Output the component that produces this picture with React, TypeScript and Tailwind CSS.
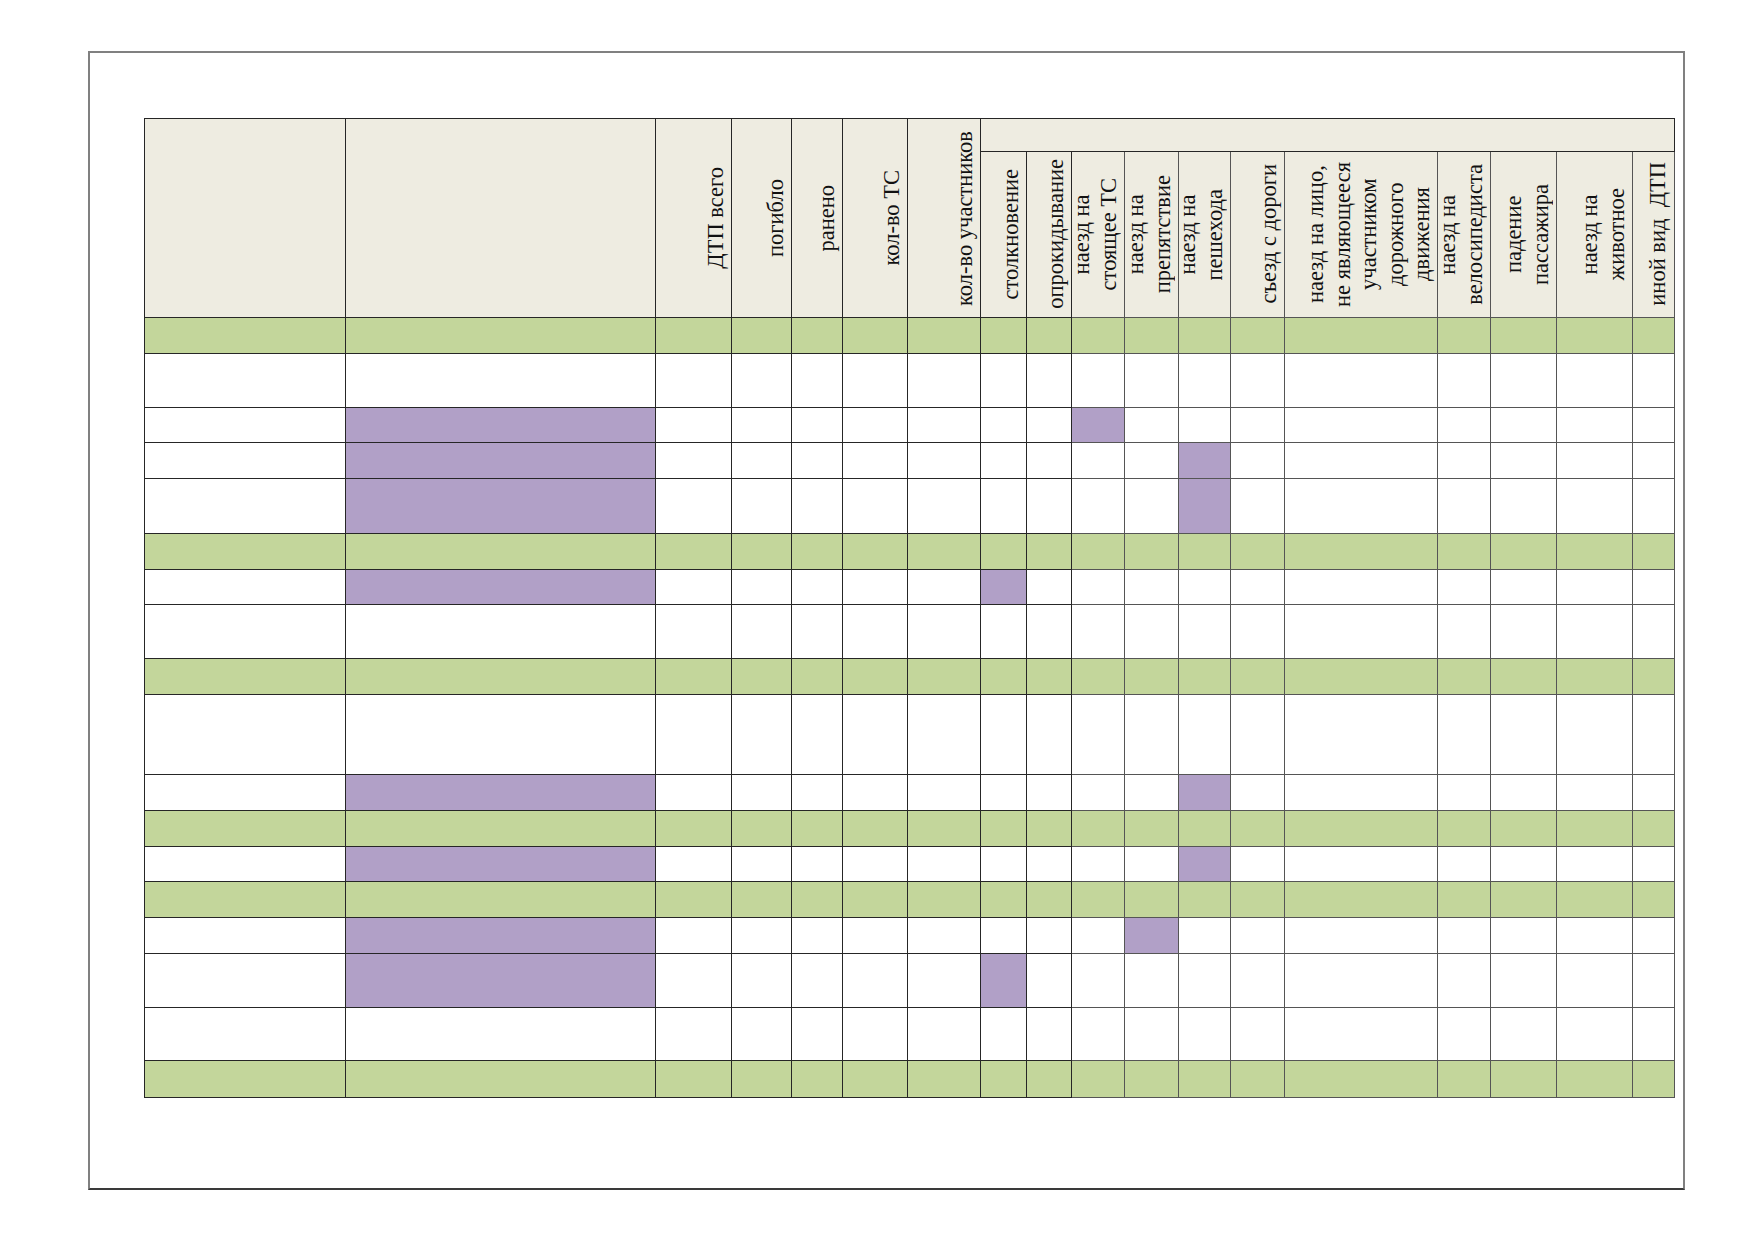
const HEAD = [
  { w: 'w-[201.5px]', lines: [] as string[] },
  { w: 'w-[310px]', lines: [] as string[] },
  { w: 'w-[76px]', lines: ['ДТП всего'] },
  { w: 'w-[60px]', lines: ['погибло'] },
  { w: 'w-[51px]', lines: ['ранено'] },
  { w: 'w-[65px]', lines: ['кол-во ТС'] },
  { w: 'w-[73px]', lines: ['кол-во участников'] },
];

const SUB = [
  { w: 'w-[46px]', lines: ['столкновение'] },
  { w: 'w-[45px]', lines: ['опрокидывание'] },
  { w: 'w-[53px]', lines: ['наезд на', 'стоящее ТС'] },
  { w: 'w-[54px]', lines: ['наезд на', 'препятствие'] },
  { w: 'w-[52px]', lines: ['наезд на', 'пешехода'] },
  { w: 'w-[54px]', lines: ['съезд с дороги'] },
  { w: 'w-[153px]', lines: ['наезд на лицо,', 'не являющееся', 'участником', 'дорожного', 'движения'] },
  { w: 'w-[53px]', lines: ['наезд на', 'велосипедиста'] },
  { w: 'w-[66px]', lines: ['падение', 'пассажира'] },
  { w: 'w-[76px]', lines: ['наезд на', 'животное'] },
  { w: 'w-[41.5px]', lines: ['иной вид\u00a0\u00a0ДТП'] },
];

const COLS = [...HEAD, ...SUB];

// green = итоговая строка, marks = индексы закрашенных ячеек
const ROWS = [
  { green: true, h: 'h-[36px]', marks: [] as number[] },
  { green: false, h: 'h-[54px]', marks: [] },
  { green: false, h: 'h-[35px]', marks: [1, 9] },
  { green: false, h: 'h-[36px]', marks: [1, 11] },
  { green: false, h: 'h-[55px]', marks: [1, 11] },
  { green: true, h: 'h-[36px]', marks: [] },
  { green: false, h: 'h-[35px]', marks: [1, 7] },
  { green: false, h: 'h-[54px]', marks: [] },
  { green: true, h: 'h-[36px]', marks: [] },
  { green: false, h: 'h-[80px]', marks: [] },
  { green: false, h: 'h-[36px]', marks: [1, 11] },
  { green: true, h: 'h-[36px]', marks: [] },
  { green: false, h: 'h-[35px]', marks: [1, 11] },
  { green: true, h: 'h-[36px]', marks: [] },
  { green: false, h: 'h-[36px]', marks: [1, 10] },
  { green: false, h: 'h-[54px]', marks: [1, 7] },
  { green: false, h: 'h-[53px]', marks: [] },
  { green: true, h: 'h-[37px]', marks: [] },
];

function line(i: number) {
  return i < 9 ? 'border-[#262626]' : 'border-[#555555]';
}

function Vertical({ lines, h }: { lines: string[]; h: string }) {
  return (
    <div className={`flex ${h} items-center justify-end pr-[2px]`}>
      {lines.length > 0 && (
        <div className="rotate-180 whitespace-nowrap text-center font-['Liberation_Serif','Times_New_Roman',serif] text-[22.5px] leading-[26.5px] text-[#111] [writing-mode:vertical-rl]">
          {lines.map((t, k) => (
            <div key={k}>{t}</div>
          ))}
        </div>
      )}
    </div>
  );
}

export default function App() {
  return (
    <div className="min-h-screen bg-white pt-[51px] pl-[88px] font-['Liberation_Serif',serif]">
      <div className="h-[1139px] w-[1597px] border-2 border-[#808080] border-b-[#3a3a3a] pl-[53.5px] pt-[65px]">
        <table className="w-[1530px] table-fixed border-collapse border border-[#1a1a1a]">
          <colgroup>
            {COLS.map((c, i) => (
              <col key={i} className={c.w} />
            ))}
          </colgroup>
          <thead>
            <tr className="h-[32.5px]">
              {HEAD.map((c, i) => (
                <th key={i} rowSpan={2} className={`border bg-[#eeece1] p-0 align-middle font-normal ${line(i)}`}>
                  <Vertical lines={c.lines} h="h-[198px]" />
                </th>
              ))}
              <th colSpan={SUB.length} className="border border-[#262626] bg-[#eeece1] p-0" />
            </tr>
            <tr className="h-[166.5px]">
              {SUB.map((c, i) => (
                <th key={i} className={`border bg-[#eeece1] p-0 align-middle font-normal ${line(i + 7)}`}>
                  <Vertical lines={c.lines} h="h-[165px]" />
                </th>
              ))}
            </tr>
          </thead>
          <tbody>
            {ROWS.map((r, ri) => (
              <tr key={ri} className={r.h}>
                {COLS.map((_, ci) => (
                  <td
                    key={ci}
                    className={`border p-0 ${line(ci)} ${
                      r.green ? 'bg-[#c3d69b]' : r.marks.includes(ci) ? 'bg-[#b1a0c7]' : 'bg-white'
                    }`}
                  />
                ))}
              </tr>
            ))}
          </tbody>
        </table>
      </div>
    </div>
  );
}
